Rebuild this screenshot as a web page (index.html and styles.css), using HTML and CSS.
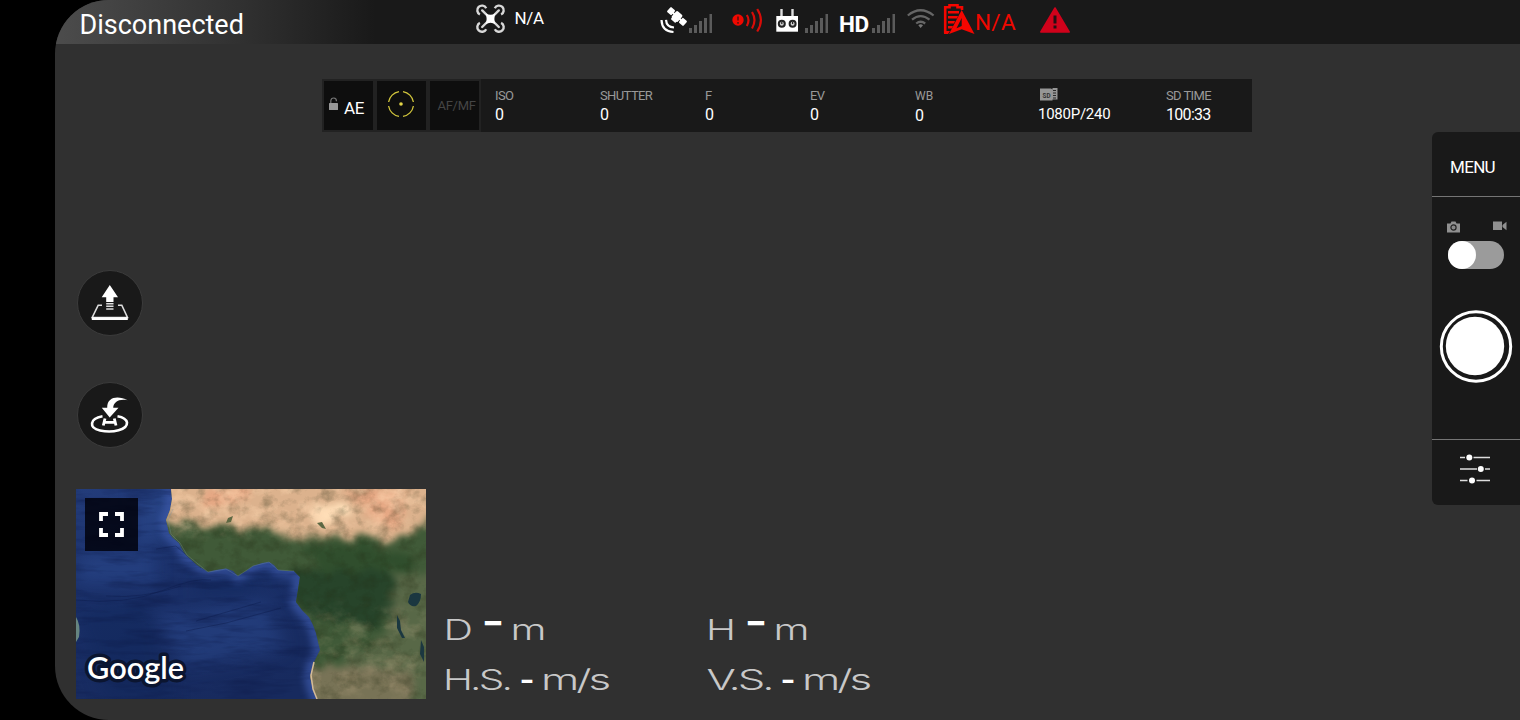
FILE: index.html
```html
<!DOCTYPE html>
<html lang="en">
<head>
<meta charset="utf-8">
<title>Flight camera</title>
<link rel="stylesheet" href="styles.css">
</head>
<body>
<div class="screen">
  <header class="status">
    <h1 class="status-title">Disconnected</h1>
    <svg width="40" height="44" viewBox="470 0 40 44">
      <g transform="translate(490.500 18.700)">
        <g fill="none" stroke="#d8d8d8" stroke-width="2.400">
          <path id="rotor" d="M-10.600-4.200A4.700 4.700 0 1 1-4.300-10.500"/>
          <use href="#rotor" transform="scale(-1 1)"/><use href="#rotor" transform="scale(1 -1)"/><use href="#rotor" transform="scale(-1 -1)"/>
          <path d="M-8.300-8.300L8.300 8.300M8.300-8.300L-8.300 8.300" stroke-linecap="round"/>
        </g>
        <path d="M-5-5.500Q0-2.500 5-5.500Q2.800 0 5 5.500Q0 2.500-5 5.500Q-2.800 0-5-5.500Z" fill="#fff"/>
      </g>
    </svg>
    <span class="flight-mode">N/A</span>
    <svg width="60" height="44" viewBox="655 0 60 44">
      <g transform="translate(677 16.500) rotate(42)" fill="#fff">
        <rect x="-4" y="-4.500" width="8" height="9" rx="1.500"/>
        <rect x="-11" y="-3.200" width="6" height="6.400" rx="1"/>
        <rect x="5" y="-3.200" width="6" height="6.400" rx="1"/>
        <path d="M-6-1H6V1H-6Z"/><path d="M-3 3H3V6H-3Z"/>
      </g>
      <path d="M661.500 20Q662 31.500 673.500 32M666 19.800Q666.500 27 674 27.500" fill="none" stroke="#fff" stroke-width="2.200"/>
      <path fill="#5b5b5b" d="M689 28h3v5h-3zM694 25h3v8h-3zM699 21h3v12h-3zM704 18h3v15h-3zM709.500 14h2.500v19h-2.500z"/>
    </svg>
    <svg width="55" height="44" viewBox="715 0 55 44">
      <circle cx="738" cy="20" r="5.700" fill="#f00800"/>
      <path d="M738 16.500v4M738 22v1.800" stroke="#5c1110" stroke-width="1.600"/>
      <path d="M746.800 15Q750.200 20 746.800 26M752 12Q757 20 752 28.500M757.200 9Q764.600 20 757.200 31.500" fill="none" stroke="#d80c08" stroke-width="2.200"/>
    </svg>
    <svg width="67" height="44" viewBox="770 0 67 44">
      <path fill="#ddd" d="M780.300 9h2.400v7h-2.400zM791.300 9h2.400v7h-2.400z"/><path fill="#fff" d="M776.300 16H798v15.700H776.300z"/>
      <g fill="#ccc" stroke="#222" stroke-width="2"><circle cx="781.800" cy="23.800" r="3"/><circle cx="792.600" cy="23.800" r="3"/></g>
      <path d="M781.800 22v2M792.600 22v2" stroke="#222" stroke-width="1.200"/>
      <path fill="#5b5b5b" d="M805 28h3v5h-3zM810 25h3v8h-3zM815 21h3v12h-3zM820 18h3v15h-3zM825.500 14h2.500v19h-2.500z"/>
    </svg>
    <span class="hd">HD</span>
    <svg width="70" height="44" viewBox="870 0 70 44">
      <path fill="#5b5b5b" d="M872 28h3v5h-3zM877 25h3v8h-3zM882 21h3v12h-3zM887 18h3v15h-3zM892.500 14h2.500v19h-2.500z"/>
      <g fill="none" stroke="#666" stroke-width="2.200"><path d="M907.800 15.500Q920.600 5 933.600 15.500M912 19.700Q920.600 12.500 929.500 19.700M916.200 23.500Q920.600 20 925.200 23.500"/></g>
      <path d="M918.300 25.200Q920.600 23.500 923 25.200L920.600 28Z" fill="#777"/>
    </svg>
    <svg width="36" height="44" viewBox="940 0 36 44">
      <path d="M945.200 33V7.200H949.500V5.200H957.500V7.200H962V10" fill="none" stroke="#f40600" stroke-width="2.600"/>
      <path d="M948 11h11v2.400h-11zM948 16h10l-1 2.400h-9zM948 21h7l-1 2.400h-6zM948 26h5l-1 2.400h-4z" fill="#f40600"/>
      <path d="M944 31h6l-2 3h-4z" fill="#f40600"/>
      <path fill-rule="evenodd" d="M961.700 10L974.500 34L961.700 29.200L949 34ZM961.700 18L956.500 28.200L961.700 26Z" fill="#f40600"/>
    </svg>
    <span class="battery">N/A</span>
    <svg width="40" height="44" viewBox="1035 0 40 44">
      <path d="M1055 8L1069.200 32H1040.800Z" fill="#d0021b" stroke="#d0021b" stroke-width="1.500" stroke-linejoin="round"/>
      <path d="M1055 15.500V23.500M1055 25.500V28.500" stroke="#241014" stroke-width="3"/>
    </svg>
  </header>

  <section class="camera-bar">
    <div class="tile ae">
      <svg width="11" height="14" viewBox="0 0 11 14"><path d="M2.800 6V3.800Q3 1 5.800 1Q8.500 1 8.500 4.200" fill="none" stroke="#777" stroke-width="1.200"/><rect x="1" y="6" width="9" height="7" rx=".6" fill="#989898"/></svg>
      <span>AE</span>
    </div>
    <div class="tile spot">
      <svg width="28" height="28" viewBox="-14 -14 28 28"><path d="M2-12.400A12.500 12.500 0 0 1 12.400-2M12.400 2A12.500 12.500 0 0 1 2 12.400M-2 12.400A12.500 12.500 0 0 1-12.400 2M-12.400-2A12.500 12.500 0 0 1-2-12.400" fill="none" stroke="#d2c63c" stroke-width="1.300"/><circle r="1.800" fill="#e3d548"/></svg>
    </div>
    <div class="tile focus">AF/MF</div>
    <div class="param"><span>ISO</span><b>0</b></div>
    <div class="param"><span>SHUTTER</span><b>0</b></div>
    <div class="param"><span>F</span><b>0</b></div>
    <div class="param"><span>EV</span><b>0</b></div>
    <div class="param wb"><span>WB</span><b>0</b></div>
    <div class="param storage">
      <svg width="18" height="13" viewBox="0 0 18 13"><path d="M0 .5H11L12.500 1.500V0H17.500V11.500H12.500V12.500H0Z" fill="#969696"/><path d="M13 2.500h3M13 5h3M13 7.500h3M13 10h3" stroke="#292929" stroke-width="1"/><text class="sd" x="2.500" y="9.700" textLength="8" lengthAdjust="spacingAndGlyphs">SD</text></svg>
      <b>1080P/240</b>
    </div>
    <div class="param time"><span>SD TIME</span><b>100:33</b></div>
  </section>

  <main class="workspace">
    <div class="left">
      <button class="round" aria-label="Take off">
        <svg width="64" height="64" viewBox="78 271 64 64">
          <path d="M109.800 285L118 297.200H113.500V302H106.200V297.200H101.700Z" fill="#fff"/>
          <path d="M106.200 303.700h7.300M106.200 306.300h7.300M106.200 309h7.300" stroke="#ddd" stroke-width="1.500"/>
          <path d="M102 305.200H98.200L92.200 317.500H127.500L121.800 305.200H118" fill="none" stroke="#ddd" stroke-width="1.600"/><path d="M91.800 317.300h36v2.700h-36z" fill="#fff"/>
        </svg>
      </button>
      <button class="round" aria-label="Return home">
        <svg width="64" height="64" viewBox="78 383 64 64">
          <path d="M102.500 416.300C89.500 418.500 88.500 428 100 430.500C113 433.200 127.500 429.800 127 422.500Q126 417.800 117.500 416.300" fill="none" stroke="#fff" stroke-width="2.600"/>
          <path d="M127.500 400.200C119 395.500 107 396 107.200 407.800H101.800L109.700 417.500L118.500 407.800H113.200C113.500 402 119 398.500 127.500 400.200Z" fill="#fff"/>
          <path d="M105 418.500L103.300 425.500M114.300 418.500L116 425.500M104 422.300H115" stroke="#fff" stroke-width="2.800"/>
        </svg>
      </button>
      <div class="bottom">
        <div class="map">
          <svg width="350" height="210" viewBox="0 0 350 210" color-interpolation-filters="sRGB">
            <defs>
              <linearGradient id="sea" x1="0" y1="0" x2=".4" y2="1"><stop offset="0" stop-color="#233c7a"/><stop offset=".4" stop-color="#1b316b"/><stop offset="1" stop-color="#172a5e"/></linearGradient>
              <linearGradient id="fade" x1="0" y1="0" x2="0" y2="1"><stop offset=".5" stop-color="#fff"/><stop offset="1" stop-color="#000"/></linearGradient>
              <mask id="desert"><rect x="80" width="270" height="54" fill="url(#fade)"/></mask>
              <mask id="savanna"><rect x="225" y="120" width="125" height="90" fill="#fff" filter="url(#b7)"/></mask>
              <filter id="b2" x="-20%" y="-20%" width="140%" height="140%"><feGaussianBlur stdDeviation="3.500"/></filter>
              <filter id="b7" x="-30%" y="-30%" width="160%" height="160%"><feGaussianBlur stdDeviation="8"/></filter>
              <filter id="rough" x="-10%" y="-10%" width="120%" height="120%"><feTurbulence type="fractalNoise" baseFrequency=".07" numOctaves="4" seed="4"/><feDisplacementMap in="SourceGraphic" scale="22" xChannelSelector="R" yChannelSelector="G"/><feGaussianBlur stdDeviation="3"/></filter>
              <filter id="darkgrain" x="0" y="0" width="100%" height="100%"><feTurbulence type="fractalNoise" baseFrequency=".07 .08" numOctaves="5" seed="8"/><feColorMatrix values="0 0 0 0 .13  0 0 0 0 .16  0 0 0 0 .07  2.600 0 0 0 -1.150"/></filter>
              <filter id="lightgrain" x="0" y="0" width="100%" height="100%"><feTurbulence type="fractalNoise" baseFrequency=".045 .06" numOctaves="5" seed="21"/><feColorMatrix values="0 0 0 0 1  0 0 0 0 .85  0 0 0 0 .7  0 2.600 0 0 -1.150"/></filter>
              <filter id="waves" x="0" y="0" width="100%" height="100%"><feTurbulence type="fractalNoise" baseFrequency=".02 .12" numOctaves="4" seed="6"/><feColorMatrix values="0 0 0 0 .05  0 0 0 0 .1  0 0 0 0 .28  2.500 0 0 0 -1.100"/></filter>
              <path id="coast" d="M95 0L96 10L94 21L90 31L93 44L97 49L103 54L107 62L110 66L121 76L132 83L140 81L150 79.500L157 82L162 87L170 82L177 77L186 74L193 73L198 76L202 81L211 82L218 82L224 88L222 101L220 113L226 121L233 128L237 136L240 144L242 153L244 161L238 173L236 181L234 188L237 200L241 210H350V0Z"/>
              <clipPath id="land"><use href="#coast"/></clipPath>
            </defs>
            <rect width="350" height="210" fill="url(#sea)"/>
            <g filter="url(#b7)"><path d="M60 0H95V45L60 62ZM5 65H80V95H0ZM80 128L190 112L210 160L110 180Z" fill="#3456a0" opacity=".35"/><path d="M0 120L70 110L100 210H30ZM120 90H190L170 105H120Z" fill="#0d2458" opacity=".38"/></g>
            <use href="#coast" fill="none" stroke="#3f5db0" stroke-width="13" opacity=".65" filter="url(#b2)"/>
            <rect width="350" height="210" filter="url(#waves)" opacity=".45"/>
            <g fill="none" stroke="#0b1b4a" stroke-width=".7" opacity=".6"><path d="M0 111Q50 116 85 102T135 91M30 107Q66 110 105 97M110 142L150 134L205 119M120 132L185 113M80 60L100 57L125 79"/></g>
            <path d="M0 128Q5 136 3 148L0 153Z" fill="#668581"/>
            <g clip-path="url(#land)">
              <rect x="80" width="270" height="210" fill="#405a38"/>
              <g filter="url(#rough)">
                <path d="M80-20H370V22Q345 30 337 46L315 53L290 46L260 50L220 47L185 42L150 37L80 34Z" fill="#dcb28d"/>
                <path d="M210 85L250 77L290 75L325 90L322 125L300 140L275 132L240 130L218 110Z" fill="#27442a"/>
                <path d="M225 58L285 56L330 66L335 82L250 82Z" fill="#304e2d"/>
                <path d="M320 85H370V220H225L235 180L285 165L310 140Z" fill="#697252" opacity=".6"/>
                <path d="M220 180L270 176L340 184L335 220H225Z" fill="#84775c" opacity=".75"/>
                <path d="M130 0L180-3L160 15L125 18ZM270 0L330 0L325 35L305 43L285 16Z" fill="#e6a884"/>
                <path d="M240 15L270 17L278 27L235 31Z" fill="#ffdfb8"/>
              </g>
              <rect x="80" width="270" height="210" filter="url(#darkgrain)" opacity=".28"/>
              <g mask="url(#desert)"><rect x="80" width="270" height="60" filter="url(#lightgrain)" opacity=".6"/></g>
              <g mask="url(#savanna)"><rect x="205" y="100" width="145" height="110" filter="url(#lightgrain)" opacity=".2"/></g>
              <path d="M241 34L246 33L250 40L246 39ZM152 29L157 27L155 33L150 34Z" fill="#5d6843"/>
              <path d="M334 106Q339 102 345 105Q345 113 340 117Q334 118 332 113ZM321 126L324 132L325 141L329 149L326 149L321 139ZM345 151L348 158V173L344 165Z" fill="#1b3740"/>
            </g>
            <path d="M97 20L92 31L95 45L104 54L111 66L132 83L150 80L162 87L177 77L193 73L202 81L218 82" fill="none" stroke="#7793a4" stroke-width=".8" opacity=".4"/>
            <path d="M238 173L235 186L237 200L241 210" fill="none" stroke="#d5bb99" stroke-width="1.500"/>
            <text class="google" x="11" y="189.500" textLength="97" lengthAdjust="spacingAndGlyphs">Google</text>
          </svg>
          <button class="expand" aria-label="Full screen"><svg width="27" height="27" viewBox="0 0 27 27"><path d="M3 10V3H10M17 3H24V10M24 17V24H17M10 24H3V17" fill="none" stroke="#fff" stroke-width="3.800"/></svg></button>
        </div>
        <div class="telemetry">
          <svg width="263" height="50" viewBox="444 605 263 50"><text x="443.500" y="640" textLength="29.500" lengthAdjust="spacingAndGlyphs">D</text><text class="dash big" x="481.500" y="633.500" textLength="23" lengthAdjust="spacingAndGlyphs">-</text><text x="510.500" y="640" textLength="36" lengthAdjust="spacingAndGlyphs">m</text></svg>
          <svg width="263" height="50" viewBox="707 605 263 50"><text x="706" y="640" textLength="30" lengthAdjust="spacingAndGlyphs">H</text><text class="dash big" x="744.500" y="633.500" textLength="23" lengthAdjust="spacingAndGlyphs">-</text><text x="773.500" y="640" textLength="36" lengthAdjust="spacingAndGlyphs">m</text></svg>
          <svg width="263" height="50" viewBox="444 655 263 50"><text class="tight" x="443" y="690" textLength="67" lengthAdjust="spacingAndGlyphs">H.S.</text><text class="dash" x="519.500" y="690" textLength="15" lengthAdjust="spacingAndGlyphs">-</text><text class="tight" x="541" y="690" textLength="67" lengthAdjust="spacingAndGlyphs">m/s</text></svg>
          <svg width="263" height="50" viewBox="707 655 263 50"><text class="tight" x="706.500" y="690" textLength="65" lengthAdjust="spacingAndGlyphs">V.S.</text><text class="dash" x="780.500" y="690" textLength="15" lengthAdjust="spacingAndGlyphs">-</text><text class="tight" x="802" y="690" textLength="67" lengthAdjust="spacingAndGlyphs">m/s</text></svg>
        </div>
      </div>
    </div>
    <aside class="controls">
      <button class="menu">MENU</button>
      <div class="capture">
        <div class="modes">
          <svg width="13" height="12" viewBox="0 0 13 12"><path d="M0 2.500H3.500L4.500.5H8.500L9.500 2.500H13V11.500H0Z" fill="#909090"/><circle cx="6.500" cy="6.500" r="2.600" fill="#888" stroke="#222" stroke-width="1.200"/></svg>
          <svg width="14" height="10" viewBox="0 0 14 10"><path d="M0 .5H9V9H0ZM9.500 4L13.500 .7V9.300L9.500 6Z" fill="#909090"/></svg>
        </div>
        <div class="toggle"><i></i></div>
        <button class="shutter-button" aria-label="Shutter"><svg width="74" height="74" viewBox="0 0 74 74"><circle cx="37" cy="37.500" r="34.700" fill="none" stroke="#fff" stroke-width="3"/><circle cx="36" cy="37" r="29.200" fill="#fff"/></svg></button>
      </div>
      <button class="settings" aria-label="Settings"><svg width="30" height="30" viewBox="0 0 30 30"><g stroke="#ddd" stroke-width="1.600"><path d="M0 3.500H5M13.500 3.500H30M0 15H17M25 15H30M0 26.500H7.500M16.500 26.500H30"/></g><g fill="#fff"><circle cx="9.300" cy="3.500" r="3"/><circle cx="20.800" cy="15" r="3"/><circle cx="12" cy="26.500" r="3"/></g></svg></button>
    </aside>
  </main>
</div>
</body>
</html>
```
FILE: styles.css
```css
* { box-sizing: border-box; }
body { margin: 0; background: #000; color: #fff; font-family: Roboto, "Liberation Sans", sans-serif; }
svg { display: block; flex: none; }
button { padding: 0; border: 0; color: inherit; font: inherit; background: none; }
.screen { display: flex; flex-direction: column; height: 720px; margin-left: 55px; overflow: hidden; background: #303030; border-radius: 54px 0 0 54px; }
.status { display: flex; flex: none; height: 44px; background: linear-gradient(90deg, #4c4c4c 0, #303030 190px, #191919 320px); }
.status-title { width: 415px; margin: 0; padding-left: 24.5px; font-size: 27px; font-weight: 400; line-height: 50px; }
.flight-mode { width: 145px; padding-left: 4.5px; font-size: 17px; line-height: 37px; letter-spacing: -.3px; }
.hd { width: 33px; padding-left: 2px; font-size: 22.5px; font-weight: 700; line-height: 49px; letter-spacing: -.5px; }
.battery { width: 59px; margin-left: -1px; margin-right: 1px; font-size: 22.5px; font-weight: 400; line-height: 45px; letter-spacing: .3px; color: #f00800; }

.camera-bar { display: flex; flex: 0 0 53px; width: 930px; margin: 35px 0 0 267px; background: #191919; }
.tile { display: flex; flex: 0 0 53px; border: 2px solid #222; background: #0e0e0e; }
.ae { padding: 16px 0 0 4px; gap: 5px; font-size: 17px; line-height: 23px; letter-spacing: -.4px; }
.spot { padding: 9px 0 0 10px; }
.focus { padding: 16px 0 0 7.5px; font-size: 13px; line-height: 17px; letter-spacing: -.3px; color: #454545; }
.param { width: 105px; padding: 9px 0 0 14px; }
.param span, .param b { display: block; white-space: nowrap; }
.param span { font-size: 13px; line-height: 16px; letter-spacing: -.6px; color: #999; }
.param b { font-size: 16px; font-weight: 400; line-height: 22px; letter-spacing: -.7px; }
.param.wb span { font-size: 12px; line-height: 17px; letter-spacing: 0; }
.storage { width: 146px; padding: 9px 0 0 32px; }
.storage svg { margin-left: 2px; }
.param.storage b { font-size: 15px; line-height: 26px; letter-spacing: -.25px; }
.time { width: 100px; }
.sd { font: 700 8px Roboto, sans-serif; fill: #333; }

.workspace { display: flex; flex: 1; justify-content: space-between; min-height: 0; }
.left { padding: 138px 0 0 21px; }
.round { display: block; width: 66px; height: 66px; margin: 0 0 46px 1px; border: 1px solid #3b3b3b; border-radius: 50%; background: #191919; }
.bottom { display: flex; margin-top: -5px; }
.map { position: relative; width: 350px; height: 210px; overflow: hidden; }
.expand { position: absolute; left: 9px; top: 9px; display: grid; place-items: center; width: 53px; height: 53px; background: rgba(0, 0, 8, .82); }
.google { font: 600 31px Lato, sans-serif; fill: #fff; stroke: #0b1530; stroke-width: 7px; stroke-linejoin: round; paint-order: stroke; }
.telemetry { display: grid; grid-template-columns: 263px 263px; grid-auto-rows: 50px; margin: 116px 0 0 18px; }
.telemetry svg { overflow: visible; }
.telemetry text { font: 300 28.5px Inter, "Liberation Sans", sans-serif; fill: #c8c8c8; }
.telemetry .tight { letter-spacing: -2px; }
.telemetry .dash { font-weight: 700; fill: #fff; }
.telemetry .big { font-size: 36px; }

.controls { display: flex; flex-direction: column; width: 88px; height: 373px; border-radius: 6px 0 0 6px; background: #191919; }
.menu { flex: 0 0 65px; padding: 5px 7px 0 0; font-size: 17px; letter-spacing: -.7px; border-bottom: 1px solid #757575; }
.capture { flex: 1; padding: 24px 0 0 7px; }
.modes { display: flex; justify-content: space-between; width: 60px; margin-left: 8px; }
.toggle { width: 56px; height: 28px; margin: 8px 0 0 9px; border-radius: 14px; background: #9b9b9b; }
.toggle i { display: block; width: 28px; height: 28px; border-radius: 50%; background: #fff; }
.shutter-button { display: block; margin-top: 40px; }
.settings { display: flex; flex: 0 0 66px; align-items: flex-start; padding: 14px 0 0 28px; border-top: 1px solid #757575; }
```
